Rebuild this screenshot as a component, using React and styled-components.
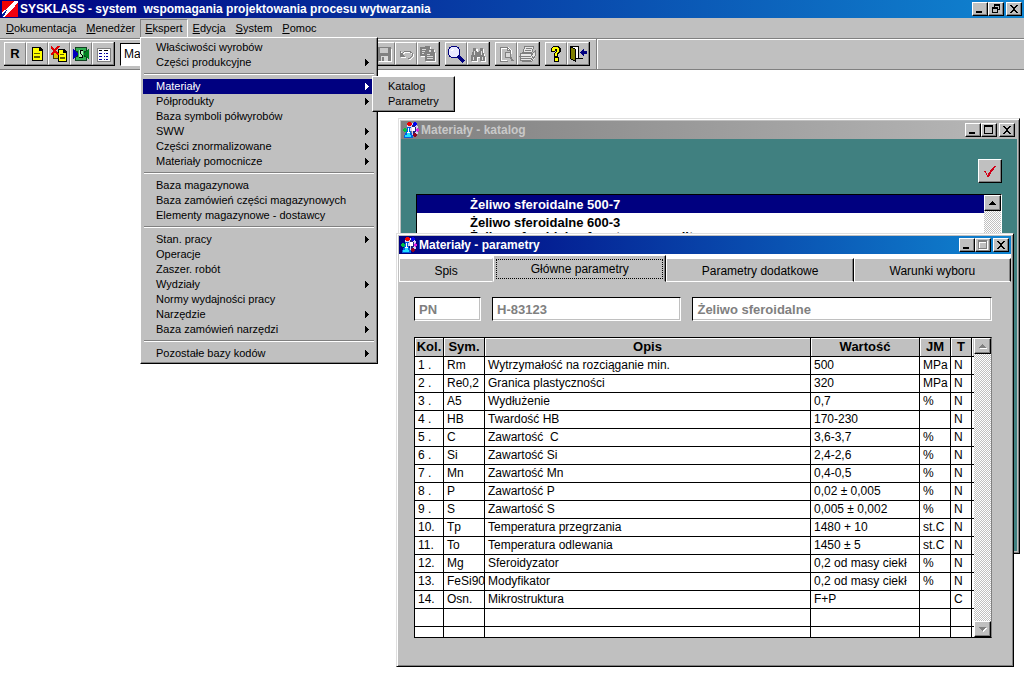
import React, { useState } from "react";
import styled, { createGlobalStyle, css } from "styled-components";

const GlobalStyle = createGlobalStyle`
  * { box-sizing: border-box; }
  body {
    margin: 0;
    background: #fff;
    color: #000;
    font-family: "Liberation Sans", Arial, sans-serif;
    font-size: 11px;
    overflow: hidden;
  }
  button, input, select {
    font-family: inherit;
    font-size: inherit;
    color: inherit;
    margin: 0;
    border-radius: 0;
  }
  svg { display: block; flex-shrink: 0; }
`;

const raised = css`
  background: #c0c0c0;
  border: 1px solid;
  border-color: #fff #000 #000 #fff;
  box-shadow: inset -1px -1px 0 #808080;
`;

const Screen = styled.div`
  min-height: 100vh;
  display: flex;
  flex-direction: column;
`;

const TitleBar = styled.header`
  display: flex;
  align-items: center;
  height: 18px;
  padding: 0 2px;
  gap: 2px;
  color: ${(p) => (p.$inactive ? "#c8c8c8" : "#fff")};
  background: ${(p) =>
    p.$inactive
      ? "linear-gradient(to right, #808080, #b8b8b8)"
      : "linear-gradient(to right, #000080, #1084d0)"};
`;

const Title = styled.h1`
  flex: 1;
  margin: 0;
  font-size: 12px;
  font-weight: bold;
  line-height: 18px;
  white-space: pre;
`;

const TitleButtons = styled.div`
  display: flex;
`;

const TitleButton = styled.button`
  ${raised}
  width: 16px;
  height: 14px;
  padding: 0;
  display: flex;
  align-items: center;
  justify-content: center;
  & + &:last-child { margin-left: 2px; }
`;

const MenuBar = styled.nav`
  position: relative;
  display: flex;
  height: 20px;
  padding: 1px 0 0 1px;
  background: #c0c0c0;
`;

const MenuTop = styled.button`
  height: 19px;
  padding: 0 4px;
  line-height: 17px;
  background: #c0c0c0;
  border: 1px solid;
  border-color: ${(p) => (p.$open ? "#808080 #fff #c0c0c0 #808080" : "#c0c0c0")};
`;

const Dropdown = styled.div`
  position: absolute;
  z-index: 20;
  left: ${(p) => p.$left}px;
  top: ${(p) => p.$top}px;
  width: ${(p) => p.$width}px;
  padding: 2px;
  background: #c0c0c0;
  border: 1px solid;
  border-color: #fff #000 #000 #fff;
  box-shadow: inset -1px -1px 0 #808080;
`;

const MenuItem = styled.button`
  display: flex;
  align-items: center;
  justify-content: space-between;
  width: 100%;
  height: 15px;
  padding: 0 6px 0 13px;
  border: 0;
  text-align: left;
  line-height: 13px;
  white-space: nowrap;
  background: ${(p) => (p.$active ? "#000080" : "transparent")};
  color: ${(p) => (p.$active ? "#fff" : "#000")};
`;

const Separator = styled.hr`
  height: 2px;
  margin: 3px 1px 4px;
  border: 0;
  border-top: 1px solid #808080;
  border-bottom: 1px solid #fff;
`;

const Toolbar = styled.div`
  display: flex;
  align-items: center;
  height: 32px;
  background: #c0c0c0;
  border-top: 1px solid #808080;
  border-bottom: 1px solid #808080;
  box-shadow: inset 0 1px 0 #fff;
`;

const ToolStrip = styled.div`
  display: flex;
  align-items: center;
  gap: 5px;
  height: 30px;
  width: 597px;
  padding: 0 6px 0 4px;
  border-right: 1px solid #808080;
  box-shadow: 1px 0 0 #fff;
`;

const ToolGroup = styled.div`
  display: flex;
  height: 24px;
  border-right: 1px solid #000;
  border-bottom: 1px solid #000;
`;

const ToolButton = styled.button`
  width: 22px;
  height: 23px;
  padding: 0;
  display: flex;
  align-items: center;
  justify-content: center;
  background: #c0c0c0;
  border: 1px solid;
  border-color: #fff #808080 #808080 #fff;
  font-size: 13px;
  font-weight: bold;
`;

const ToolSelect = styled.select`
  flex: 1;
  height: 23px;
  padding: 0 3px;
  appearance: none;
  background: #fff;
  border: 1px solid;
  border-color: #000 #fff #fff #000;
  font-size: 12px;
`;

const Desktop = styled.main`
  flex: 1;
  position: relative;
`;

const Window = styled.section`
  position: absolute;
  left: ${(p) => p.$left}px;
  right: ${(p) => p.$right}px;
  top: ${(p) => p.$top}px;
  padding: 2px;
  background: #c0c0c0;
  border: 1px solid;
  border-color: #dfdfdf #000 #000 #dfdfdf;
  box-shadow: inset 1px 1px 0 #fff, inset -1px -1px 0 #808080;
`;

const CatalogBody = styled.div`
  height: 412px;
  padding: 20px 15px 0;
  background: #408080;
`;

const ConfirmButton = styled.button`
  ${raised}
  display: flex;
  align-items: center;
  justify-content: center;
  width: 24px;
  height: 24px;
  padding: 0;
  margin: 0 0 11px auto;
`;

const CatalogList = styled.div`
  display: flex;
  height: 200px;
  background: #fff;
  border: 1px solid;
  border-color: #000 #fff #fff #000;
`;

const CatalogRows = styled.ul`
  flex: 1;
  margin: 0;
  padding: 0;
  list-style: none;
  overflow: hidden;
`;

const CatalogRow = styled.li`
  height: 18px;
  padding-left: 53px;
  font-size: 13px;
  font-weight: bold;
  line-height: 20px;
  white-space: nowrap;
  background: ${(p) => (p.$selected ? "#000080" : "#fff")};
  color: ${(p) => (p.$selected ? "#fff" : "#000")};
  & + &:last-child { line-height: 12px; }
`;

const ScrollTrack = styled.div`
  display: flex;
  flex-direction: column;
  justify-content: space-between;
  width: 17px;
  background: repeating-conic-gradient(#c0c0c0 0% 25%, #fff 0% 50%) 0 0 / 2px 2px;
`;

const ScrollButton = styled.button`
  ${raised}
  display: flex;
  align-items: center;
  justify-content: center;
  width: 100%;
  height: 16px;
  padding: 0;
`;

const TabRow = styled.div`
  display: grid;
  grid-template-columns: 94fr 173fr 187fr 157fr;
  align-items: end;
  height: 28px;
  background: #fff;
`;

const Tab = styled.button`
  height: ${(p) => (p.$selected ? 27 : 24)}px;
  padding: 2px;
  background: #c0c0c0;
  border: 1px solid;
  border-color: #fff #000 ${(p) => (p.$selected ? "#c0c0c0" : "#fff")} #fff;
  box-shadow: inset -1px 0 0 #808080;
  font-size: 12px;
  &:first-child { border-right-color: #c0c0c0; box-shadow: none; }
`;

const TabLabel = styled.span`
  display: block;
  height: 20px;
  line-height: 18px;
  border: 1px dotted ${(p) => (p.$focused ? "#000" : "transparent")};
`;

const ParamsBody = styled.div`
  padding: 15px 19px 26px 15px;
`;

const FieldRow = styled.div`
  display: grid;
  grid-template-columns: 67fr 189fr 299fr;
  gap: 11px;
  margin-bottom: 16px;
`;

const Field = styled.input`
  width: 100%;
  height: 24px;
  padding: 0 4px;
  background: #fff;
  border: 1px solid;
  border-color: #000 #fff #fff #000;
  box-shadow: inset -1px -1px 0 #c0c0c0;
  color: #808080;
  font-size: 13px;
  font-weight: bold;
`;

const Grid = styled.div`
  display: flex;
  border: 1px solid #000;
  border-right-color: #808080;
`;

const Table = styled.table`
  flex: 1;
  width: 0;
  table-layout: fixed;
  border-spacing: 0;
  background: #fff;
`;

const Th = styled.th`
  height: 19px;
  padding: 0;
  background: #c0c0c0;
  border-right: 1px solid #000;
  border-bottom: 1px solid #000;
  box-shadow: inset 1px 1px 0 #fff;
  font-size: 13px;
  line-height: 18px;
  &:last-child { border-right: 0; }
`;

const Td = styled.td`
  height: ${(p) => (p.$short ? 10 : 18)}px;
  padding: 0 0 0 3px;
  border-right: 1px solid #000;
  border-bottom: ${(p) => (p.$short ? "0" : "1px solid #000")};
  font-size: 12px;
  line-height: ${(p) => (p.$short ? 10 : 17)}px;
  white-space: pre;
  &:last-child { border-right: 0; padding: 0; }
`;

const menuTops = ["Dokumentacja", "Menedżer", "Ekspert", "Edycja", "System", "Pomoc"];

const expertMenu = [
  ["Właściwości wyrobów"],
  ["Części produkcyjne", true],
  null,
  ["Materiały", true],
  ["Półprodukty", true],
  ["Baza symboli półwyrobów"],
  ["SWW", true],
  ["Części znormalizowane", true],
  ["Materiały pomocnicze", true],
  null,
  ["Baza magazynowa"],
  ["Baza zamówień części magazynowych"],
  ["Elementy magazynowe - dostawcy"],
  null,
  ["Stan. pracy", true],
  ["Operacje"],
  ["Zaszer. robót"],
  ["Wydziały", true],
  ["Normy wydajności pracy"],
  ["Narzędzie", true],
  ["Baza zamówień narzędzi", true],
  null,
  ["Pozostałe bazy kodów", true],
];

const columns = [
  ["Kol.", 29],
  ["Sym.", 41],
  ["Opis"],
  ["Wartość", 109],
  ["JM", 31],
  ["T", 21],
  ["", 2],
];

const rows = [
  ["1 .", "Rm", "Wytrzymałość na rozciąganie min.", "500", "MPa", "N"],
  ["2 .", "Re0,2", "Granica plastyczności", "320", "MPa", "N"],
  ["3 .", "A5", "Wydłużenie", "0,7", "%", "N"],
  ["4 .", "HB", "Twardość HB", "170-230", "", "N"],
  ["5 .", "C", "Zawartość  C", "3,6-3,7", "%", "N"],
  ["6 .", "Si", "Zawartość Si", "2,4-2,6", "%", "N"],
  ["7 .", "Mn", "Zawartość Mn", "0,4-0,5", "%", "N"],
  ["8 .", "P", "Zawartość P", "0,02 ± 0,005", "%", "N"],
  ["9 .", "S", "Zawartość S", "0,005 ± 0,002", "%", "N"],
  ["10.", "Tp", "Temperatura przegrzania", "1480 + 10", "st.C", "N"],
  ["11.", "To", "Temperatura odlewania", "1450 ± 5", "st.C", "N"],
  ["12.", "Mg", "Sferoidyzator", "0,2 od masy ciekł", "%", "N"],
  ["13.", "FeSi90", "Modyfikator", "0,2 od masy ciekł", "%", "N"],
  ["14.", "Osn.", "Mikrostruktura", "F+P", "", "C"],
  ["", "", "", "", "", ""],
  ["", "", "", "", "", ""],
];

const tabs = ["Spis", "Główne parametry", "Parametry dodatkowe", "Warunki wyboru"];

const Icon = ({ size = 16, children }) => (
  <svg width={size} height={size} viewBox={`0 0 ${size} ${size}`} shapeRendering="crispEdges" fill="none" aria-hidden="true">
    {children}
  </svg>
);

const LogoIcon = () => (
  <Icon>
    <path d="M0 0h16v16H0z" fill="#f00010" />
    <path d="M0 0h13L0 9z" fill="#f00000" />
    <path d="M16 0v1l-5 7-9 8H0v-5l6-4 6-7z" fill="#fff" />
    <path d="M0 13l5-4-2 4-3 3z" fill="#0020a0" />
    <path d="M13 0h3l-5 6-5 4 4-5z" fill="#fff" />
  </Icon>
);

const FlaskIcon = () => (
  <Icon>
    <path d="M5 1h7v1h2v2h1v8h-1v1h-2v1H9V9H4V3h1z" fill="#d8d0f0" />
    <path d="M9 3h2v1h1v1h1v5h-1v1h-1v1h-1V9H9z" fill="#202080" />
    <path d="M9 5h3v4H9z" fill="#fff" />
    <path d="M5 0h3v1h1v2H8v1H5V3H4V1h1z" fill="#f00000" />
    <path d="M11 0h2v1h1v2h-1v1h-2V3h-1V1h1z" fill="#0000f0" />
    <path d="M14 6h1v1h1v2h-1v1h-1V9h-1V7h1z" fill="#e020e0" />
    <path d="M11 11h2v1h1v2h-1v1h-2v-1h-1v-2h1z" fill="#900020" />
    <path d="M1 6h2v1h1v2H3v1H1V9H0V7h1z" fill="#00c040" />
    <path d="M4 5h4v1H7v3h1v2h1v2h1v3H1v-3h1v-2h1V9h1z" fill="#0060e0" />
    <path d="M5 6h1v4h1v1H4v-1h1z" fill="#fff" />
    <path d="M4 11h3v2h1v2H2v-2h2z" fill="#20e0ff" />
  </Icon>
);

const MinimizeIcon = () => <Icon size={10}><path d="M1 7h6v2H1z" fill="#000" /></Icon>;
const CloseIcon = () => (
  <Icon size={10}>
    <path d="M1 1h2v1h1v1h2V2h1V1h2v1H8v1H7v1H6v2h1v1h1v1h1v1H7V8H6V7H4v1H3v1H1V8h1V7h1V6h1V4H3V3H2V2H1z" fill="#000" />
  </Icon>
);
const RestoreIcon = () => (
  <Icon size={10}>
    <path d="M3 0h6v2H3zM8 2h1v4H8zM7 5h1v1H7zM3 2h1v1H3zM1 3h6v2H1zM1 5h1v4H1zM6 5h1v4H6zM2 8h4v1H2z" fill="#000" />
  </Icon>
);
const MaximizeIcon = ({ disabled }) => (
  <Icon size={10}>
    {disabled && <path d="M1 1h9v9H1zM2 3v6h7V3z" fill="#fff" fillRule="evenodd" />}
    <path d="M0 0h9v9H0zM1 2v6h7V2z" fill={disabled ? "#808080" : "#000"} fillRule="evenodd" />
  </Icon>
);

const ArrowRight = () => (
  <svg width="4" height="7" viewBox="0 0 4 7" shapeRendering="crispEdges" aria-hidden="true">
    <path d="M0 0h1v1h1v1h1v1h1v1H3v1H2v1H1v1H0z" fill="currentColor" />
  </svg>
);

const ScrollArrow = ({ down, disabled }) => (
  <svg width="8" height="5" viewBox="0 0 8 5" shapeRendering="crispEdges" aria-hidden="true">
    {disabled && <path d={down ? "M1 1h7v1H7v1H6v1H5v1H4V4H3V3H2V2H1z" : "M1 4h7v1H1z"} fill="#fff" />}
    <path
      d={down ? "M0 0h7v1H6v1H5v1H4v1H3V3H2V2H1V1H0z" : "M3 0h1v1h1v1h1v1h1v1H0V3h1V2h1V1h1z"}
      fill={disabled ? "#808080" : "#000"}
    />
  </svg>
);

const NoteIcon = () => (
  <Icon>
    <path d="M3 1h8l3 3v11H3z" fill="#000" />
    <path d="M4 2h6v3h3v9H4z" fill="#ff0" />
    <path d="M5 7h6v1H5zM5 10h6v2H5z" fill="#606000" />
  </Icon>
);

const DeleteNoteIcon = () => (
  <Icon>
    <path d="M2 6h6v7H2z" fill="#404000" />
    <path d="M3 7h4v5H3z" fill="#e0c000" />
    <path d="M7 3h6l3 3v10H7z" fill="#000" />
    <path d="M8 4h4v3h3v8H8z" fill="#ff0" />
    <path d="M9 8h4v1H9zM9 11h5v2H9z" fill="#606000" />
    <path d="m0 1 8 8M8 0 0 9" stroke="#e00000" strokeWidth="2" />
  </Icon>
);

const ExchangeIcon = () => (
  <Icon>
    <path d="M2 1h12v14H2z" fill="#104020" />
    <path d="M3 2h10v3h-2v6h2v3H3v-3h2V5H3z" fill="#30b050" />
    <path d="M0 3h1v1h1v1h1v1h1v1h1v2H4v1H3v1H2v1H1v1H0z" fill="#0000c0" />
    <path d="M16 3h-1v1h-1v1h-1v1h-1v1h-1v2h1v1h1v1h1v1h1v1h1z" fill="#008020" />
    <path d="M6 4h4v8H6z" fill="#b0f0b8" />
    <path d="M10 4H7v3l2 2v2H6" stroke="#000" />
  </Icon>
);

const ListIcon = () => (
  <Icon>
    <path d="M2 2h13v13H2z" fill="#fff" stroke="#808080" />
    <path d="M4 4h3v1H4zM9 4h4v1H9z" fill="#000" />
    <path d="M4 7h3v1H4zM4 10h3v1H4zM4 13h3v1H4zM9 7h1v1H9zM11 7h2v1h-2zM9 10h1v1H9zM11 10h2v1h-2zM9 13h1v1H9zM11 13h2v1h-2z" fill="#0000a0" />
  </Icon>
);

const SaveIcon = () => (
  <Icon>
    <path d="M3 3h13v13H3z" fill="#fff" />
    <path d="M1 1h14v14H2l-1-1z" fill="#808080" />
    <path d="M4 2h8v5H4z" fill="#c8c8c8" />
    <path d="M5 10h7v5H5z" fill="#d8d8d8" />
    <path d="M6 11h2v4H6z" fill="#808080" />
  </Icon>
);

const UndoIcon = () => (
  <Icon>
    <path d="M4 9l4-3h4l3 2v3l-2 2h-2M3 6v5h5" stroke="#fff" />
    <path d="M3 9l4-4h4l3 2v3l-2 2h-2M2 5v5h5" stroke="#808080" />
    <path d="M2 6h1v1h1v1h1v1h1v1H2z" fill="#808080" />
  </Icon>
);

const PasteIcon = () => (
  <Icon>
    <path d="M1 1h10v3h4v3h1v9H6v-5H1z" fill="#fff" />
    <path d="M0 1h5V0h5v3h4v3h1v9H5v-5H0z" fill="#808080" />
    <path d="M2 3h4v1H2zM2 5h3v1H2zM2 7h2v1H2zM7 8h3v1H7zM7 10h6v1H7zM7 12h6v1H7zM9 4h2v2H9z" fill="#d8d8d8" />
  </Icon>
);

const SearchIcon = () => (
  <Icon size={18}>
    <circle cx="7" cy="7" r="6" fill="#e8e8ff" stroke="#000080" />
    <path d="M4 5h1V4h2" stroke="#fff" />
    <path d="m11 11 6 6" stroke="#000080" strokeWidth="3" />
  </Icon>
);

const BinocularsIcon = () => (
  <Icon>
    <path d="M4 3h4v3h2V3h4v3l2 6v4h-5v-4H8v4H2v-4l2-6z" fill="#fff" />
    <path d="M3 2h3v3h1v1h2V5h1V2h3v3l2 6v4h-5v-4H7v4H1v-4l2-6z" fill="#808080" />
    <path d="M4 5h1v4H4zM11 5h1v4h-1zM3 11h1v3H3zM12 11h1v3h-1z" fill="#e0e0e0" />
  </Icon>
);

const PreviewIcon = () => (
  <Icon>
    <path d="M3 2h7l3 3v3M3 2v13h6" stroke="#fff" strokeWidth="2" />
    <path d="M2 1h7l3 3v3M2 1v14h8M9 1v3h3" stroke="#808080" />
    <circle cx="10" cy="9" r="3" fill="#d8d8d8" stroke="#808080" />
    <path d="m12 11 3 4" stroke="#808080" strokeWidth="2" />
  </Icon>
);

const PrinterIcon = () => (
  <Icon size={18}>
    <path d="M6 2h9l-2 5H4zM2 8h14v5l-3 3H3l-2-2z" fill="#e8e8e8" />
    <path d="M6 1h9l-2 6H4zM7 3h6M6 5h6M2 8h12l-2 3H1zM1 11v4h11l2-4M2 13h10M14 8l2-2v5l-3 5H3" stroke="#808080" />
  </Icon>
);

const HelpIcon = () => (
  <Icon>
    <path d="M4 1h1V0h6v1h1v1h1v4h-1v1h-1v1h-1v3H6V7h1V6h1V5H7v1H3V2h1z" fill="#000" />
    <path d="M6 11h5v5H6z" fill="#000" />
    <path d="M5 1h5v1h1v4h-1v1H9v3H7V7h1V6h1V3H7v2H4V2h1zM7 12h3v3H7z" fill="#ff0" />
  </Icon>
);

const ExitIcon = () => (
  <Icon size={18}>
    <path d="M1 1h9v13H1z" fill="#000" />
    <path d="M3 2h6v11H3z" fill="#fff" />
    <path d="M1 1h1v1h2v1h2v1h1v13H6v-1H4v-1H2v-1H1z" fill="#000" />
    <path d="M2 3h2v1h2v11H4v-1H2z" fill="#808000" />
    <path d="M9 13h5v1H9z" fill="#000" />
    <path d="M11 7h1V6h1V5h1V4h1v2h3v3h-3v2h-1v-1h-1V9h-1V8h-1z" fill="#000080" />
  </Icon>
);

const CheckIcon = () => (
  <Icon>
    <path d="M2 8h2v2h1v2h1v-2h1V9h1V7h1V6h1V5h1V4h1V3h2v1h-1v1h-1v2h-1v1h-1v1H9v2H8v2H7v1H5v-2H4v-2H3V9H2z" fill="#d00018" />
  </Icon>
);

const toolGroups = [
  [["Zapisz", SaveIcon], ["Cofnij", UndoIcon], ["Wklej", PasteIcon]],
  [["Szukaj", SearchIcon], ["Znajdź", BinocularsIcon]],
  [["Podgląd", PreviewIcon], ["Drukuj", PrinterIcon]],
  [["Pomoc", HelpIcon], ["Wyjście", ExitIcon]],
];

const WindowButtons = ({ middle }) => (
  <TitleButtons>
    <TitleButton aria-label="Minimalizuj"><MinimizeIcon /></TitleButton>
    <TitleButton aria-label="Maksymalizuj">{middle}</TitleButton>
    <TitleButton aria-label="Zamknij"><CloseIcon /></TitleButton>
  </TitleButtons>
);

const ExpertMenu = () => (
  <>
    <Dropdown $left={140} $top={19} $width={238}>
      {expertMenu.map((item, i) =>
        item ? (
          <MenuItem key={i} $active={item[0] === "Materiały"}>
            {item[0]}
            {item[1] && <ArrowRight />}
          </MenuItem>
        ) : (
          <Separator key={i} />
        )
      )}
    </Dropdown>
    <Dropdown $left={372} $top={58} $width={83}>
      <MenuItem>Katalog</MenuItem>
      <MenuItem>Parametry</MenuItem>
    </Dropdown>
  </>
);

const CatalogWindow = () => (
  <Window $left={398} $right={4} $top={48}>
    <TitleBar $inactive>
      <FlaskIcon />
      <Title as="h2">Materiały - katalog</Title>
      <WindowButtons middle={<MaximizeIcon />} />
    </TitleBar>
    <CatalogBody>
      <ConfirmButton aria-label="Zatwierdź"><CheckIcon /></ConfirmButton>
      <CatalogList>
        <CatalogRows>
          <CatalogRow $selected>Żeliwo sferoidalne 500-7</CatalogRow>
          <CatalogRow>Żeliwo sferoidalne 600-3</CatalogRow>
          <CatalogRow>Żeliwo sferoidalne ferrytyczno-perlit.</CatalogRow>
        </CatalogRows>
        <ScrollTrack>
          <ScrollButton aria-label="W górę"><ScrollArrow /></ScrollButton>
        </ScrollTrack>
      </CatalogList>
    </CatalogBody>
  </Window>
);

const ParamsWindow = () => {
  const [tab, setTab] = useState(1);
  return (
    <Window $left={396} $right={10} $top={163}>
      <TitleBar>
        <FlaskIcon />
        <Title as="h2">Materiały - parametry</Title>
        <WindowButtons middle={<MaximizeIcon disabled />} />
      </TitleBar>
      <TabRow role="tablist">
        {tabs.map((label, i) => (
          <Tab key={label} role="tab" aria-selected={tab === i} $selected={tab === i} onClick={() => setTab(i)}>
            <TabLabel $focused={tab === i}>{label}</TabLabel>
          </Tab>
        ))}
      </TabRow>
      <ParamsBody>
        <FieldRow>
          <Field aria-label="Typ normy" defaultValue="PN" />
          <Field aria-label="Numer normy" defaultValue="H-83123" />
          <Field aria-label="Nazwa" defaultValue="Żeliwo sferoidalne" />
        </FieldRow>
        <Grid>
          <Table>
            <colgroup>
              {columns.map(([name, width]) => <col key={name} width={width} />)}
            </colgroup>
            <thead>
              <tr>{columns.map(([name]) => <Th key={name}>{name}</Th>)}</tr>
            </thead>
            <tbody>
              {rows.map((row, i) => (
                <tr key={i}>
                  {row.map((cell, j) => <Td key={j} $short={i === rows.length - 1}>{cell}</Td>)}
                  <Td $short={i === rows.length - 1} />
                </tr>
              ))}
            </tbody>
          </Table>
          <ScrollTrack>
            <ScrollButton aria-label="W górę"><ScrollArrow disabled /></ScrollButton>
            <ScrollButton aria-label="W dół"><ScrollArrow down disabled /></ScrollButton>
          </ScrollTrack>
        </Grid>
      </ParamsBody>
    </Window>
  );
};

const App = () => (
  <Screen>
    <GlobalStyle />
    <TitleBar>
      <LogoIcon />
      <Title>SYSKLASS - system  wspomagania projektowania procesu wytwarzania</Title>
      <WindowButtons middle={<RestoreIcon />} />
    </TitleBar>
    <MenuBar>
      {menuTops.map((name) => (
        <MenuTop key={name} $open={name === "Ekspert"}>
          <u>{name[0]}</u>{name.slice(1)}
        </MenuTop>
      ))}
      <ExpertMenu />
    </MenuBar>
    <Toolbar>
      <ToolStrip>
        <ToolGroup>
          <ToolButton>R</ToolButton>
          <ToolButton aria-label="Karta"><NoteIcon /></ToolButton>
          <ToolButton aria-label="Usuń kartę"><DeleteNoteIcon /></ToolButton>
          <ToolButton aria-label="Wymiana"><ExchangeIcon /></ToolButton>
          <ToolButton aria-label="Lista"><ListIcon /></ToolButton>
        </ToolGroup>
        <ToolSelect aria-label="Baza">
          <option>Materiały</option>
        </ToolSelect>
        {toolGroups.map((group, i) => (
          <ToolGroup key={i}>
            {group.map(([label, Glyph]) => (
              <ToolButton key={label} aria-label={label}><Glyph /></ToolButton>
            ))}
          </ToolGroup>
        ))}
      </ToolStrip>
    </Toolbar>
    <Desktop>
      <CatalogWindow />
      <ParamsWindow />
    </Desktop>
  </Screen>
);

export default App;
